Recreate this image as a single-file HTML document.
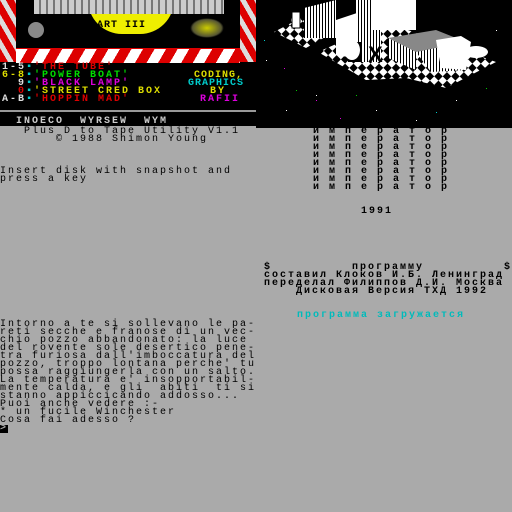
<!DOCTYPE html>
<html><head><meta charset="utf-8"><style>
*{margin:0;padding:0}
body{width:512px;height:512px;overflow:hidden;background:#aaa;position:relative;font-family:"Liberation Mono","DejaVu Sans Mono",monospace}
.t{position:absolute;font-size:10px;line-height:8px;height:8px;letter-spacing:2px;white-space:pre;color:#000;font-weight:bold}
.n{font-weight:normal}
</style></head><body>
<!-- top-left -->
<div style="position:absolute;left:0;top:0;width:256px;height:126px;background:#000"></div>
<div style="position:absolute;left:0;top:0;width:16px;height:62px;background:repeating-linear-gradient(60deg,#d00 0 7px,#ddd 7px 12px)"></div>
<div style="position:absolute;left:240px;top:0;width:16px;height:62px;background:repeating-linear-gradient(60deg,#d00 0 7px,#ddd 7px 12px)"></div>
<div style="position:absolute;left:16px;top:48px;width:224px;height:14px;background:repeating-linear-gradient(120deg,#fff 0 10px,#d00 10px 20px);border-top:1px solid #d00"></div>
<div style="position:absolute;left:88px;top:0;width:86px;height:34px;background:#ee0;border-radius:0 0 40px 40px"></div>
<div style="position:absolute;left:34px;top:0;width:190px;height:14px;background:repeating-linear-gradient(90deg,#ccc 0 5px,#777 5px 7px)"></div>
<div class="t" style="left:90px;top:22px;color:#000;letter-spacing:1px">PART III</div>
<div style="position:absolute;left:28px;top:22px;width:16px;height:16px;border-radius:50%;background:#888"></div>
<div style="position:absolute;left:190px;top:18px;width:34px;height:20px;border-radius:50%;background:radial-gradient(#cc0,#553 60%,transparent 70%)"></div>
<div class="t" style="left:2px;top:64px;color:#ddd">1-5<span style="color:#0cc">▪</span><span style="color:#d00">'THE TUBE'</span></div>
<div class="t" style="left:2px;top:72px;color:#dd0">6-8<span style="color:#0cc">▪</span><span style="color:#0d0">'POWER BOAT'</span></div>
<div class="t" style="left:2px;top:80px;color:#ddd">  9<span style="color:#0cc">▪</span><span style="color:#d0d">'BLACK LAMP'</span></div>
<div class="t" style="left:2px;top:88px;color:#d00">  0<span style="color:#0cc">▪</span><span style="color:#dd0">'STREET CRED BOX</span></div>
<div class="t" style="left:2px;top:96px;color:#ddd">A-B<span style="color:#0cc">▪</span><span style="color:#d00">'HOPPIN MAD'</span></div>
<div class="t" style="left:194px;top:72px;color:#dd0;letter-spacing:1px">CODING,</div>
<div class="t" style="left:188px;top:80px;color:#0cc;letter-spacing:1px">GRAPHICS</div>
<div class="t" style="left:210px;top:88px;color:#dd0">BY</div>
<div class="t" style="left:200px;top:96px;color:#d0d">RAFII</div>
<div style="position:absolute;left:0;top:110px;width:256px;height:2px;background:#999"></div>
<div class="t" style="left:16px;top:118px;color:#ccc">INOECO  WYRSEW  WYM</div>
<!-- top-right -->
<div style="position:absolute;left:256px;top:0;width:256px;height:128px;background:#000"></div>
<svg style="position:absolute;left:256px;top:0" width="256" height="128">
<defs><pattern id="c" width="12" height="12" patternUnits="userSpaceOnUse" patternTransform="rotate(45)"><rect width="12" height="12" fill="#000"/><rect width="6" height="6" fill="#fff"/><rect x="6" y="6" width="6" height="6" fill="#fff"/></pattern>
<pattern id="v" width="3" height="3" patternUnits="userSpaceOnUse"><rect width="3" height="3" fill="#fff"/><rect width="1" height="3" fill="#000"/></pattern></defs>
<polygon points="18,32 60,10 90,25 50,48" fill="url(#c)"/>
<polygon points="62,52 130,22 240,62 190,88 150,78 110,80" fill="url(#c)"/>
<polygon points="48,8 80,0 80,38 48,38" fill="url(#v)"/>
<polygon points="80,20 110,10 110,60 80,55" fill="#fff"/>
<polygon points="100,0 125,0 125,62 100,62" fill="url(#v)"/>
<polygon points="115,0 160,0 160,30 115,30" fill="#fff"/>
<polygon points="132,38 180,30 210,42 160,52" fill="#888"/>
<polygon points="132,38 160,52 160,70 132,58" fill="url(#v)"/>
<polygon points="160,52 210,42 210,70 175,72" fill="url(#v)"/>
<polygon points="180,40 205,36 215,42 210,70 185,68" fill="#fff"/>
<rect x="92" y="42" width="14" height="20" fill="#000"/>
<text x="112" y="62" font-family="Liberation Sans" font-weight="bold" font-size="22" fill="#000">X</text>
<circle cx="40" cy="20" r="5" fill="#fff"/><rect x="36" y="12" width="8" height="16" fill="#fff" stroke="#000"/>
<ellipse cx="96" cy="50" rx="8" ry="10" fill="#fff"/>
<ellipse cx="220" cy="52" rx="12" ry="6" fill="#fff"/>
<g fill="#fff"><rect x="10" y="60" width="1" height="1"/><rect x="60" y="95" width="1" height="1"/><rect x="120" y="110" width="1" height="1"/><rect x="200" y="100" width="1" height="1"/><rect x="240" y="30" width="1" height="1"/><rect x="30" y="110" width="1" height="1"/><rect x="160" y="120" width="1" height="1"/></g>
<g fill="#d0d"><rect x="60" y="100" width="1" height="1"/><rect x="28" y="68" width="1" height="1"/><rect x="84" y="118" width="1" height="1"/></g>
<g fill="#0c0"><rect x="40" y="90" width="1" height="1"/><rect x="230" y="88" width="1" height="1"/><rect x="100" y="95" width="1" height="1"/></g>
<g fill="#0cc"><rect x="8" y="40" width="1" height="1"/><rect x="180" y="112" width="1" height="1"/></g>
</svg>
<!-- bottom-left -->
<div class="t n" style="left:24px;top:128px">Plus D to Tape Utility V1.1</div>
<div class="t n" style="left:56px;top:136px">© 1988 Shimon Young</div>
<div class="t n" style="left:0;top:168px">Insert disk with snapshot and</div>
<div class="t n" style="left:0;top:176px">press a key</div>
<div class="t n" style="left:0;top:321px;line-height:8px;height:auto">Intorno a te si sollevano le pa-
reti secche e franose di un vec-
chio pozzo abbandonato: la luce
del rovente sole desertico pene-
tra furiosa dall'imboccatura del
pozzo, troppo lontana perche' tu
possa raggiungerla con un salto.
La temperatura e' insopportabil-
mente calda, e gli  abiti  ti si
stanno appiccicando addosso...
Puoi anche vedere :-
* un fucile Winchester
Cosa fai adesso ?</div>
<div class="t" style="left:0;top:425px;width:8px;background:#000;color:#aaa;letter-spacing:0">&gt;</div>
<!-- bottom-right -->
<div class="t" style="left:313px;top:128px;line-height:8px;height:64px">и м п е р а т о р
и м п е р а т о р
и м п е р а т о р
и м п е р а т о р
и м п е р а т о р
и м п е р а т о р
и м п е р а т о р
и м п е р а т о р</div>
<div class="t" style="left:361px;top:208px">1991</div>
<div class="t" style="left:264px;top:264px">$          программу          $</div>
<div class="t" style="left:264px;top:272px">составил Клоков И.Б. Ленинград</div>
<div class="t" style="left:264px;top:280px">переделал Филиппов Д.И. Москва</div>
<div class="t" style="left:296px;top:288px">Дисковая Версия ТХД 1992</div>
<div class="t" style="left:297px;top:312px;color:#0bb">программа загружается</div>
</body></html>
